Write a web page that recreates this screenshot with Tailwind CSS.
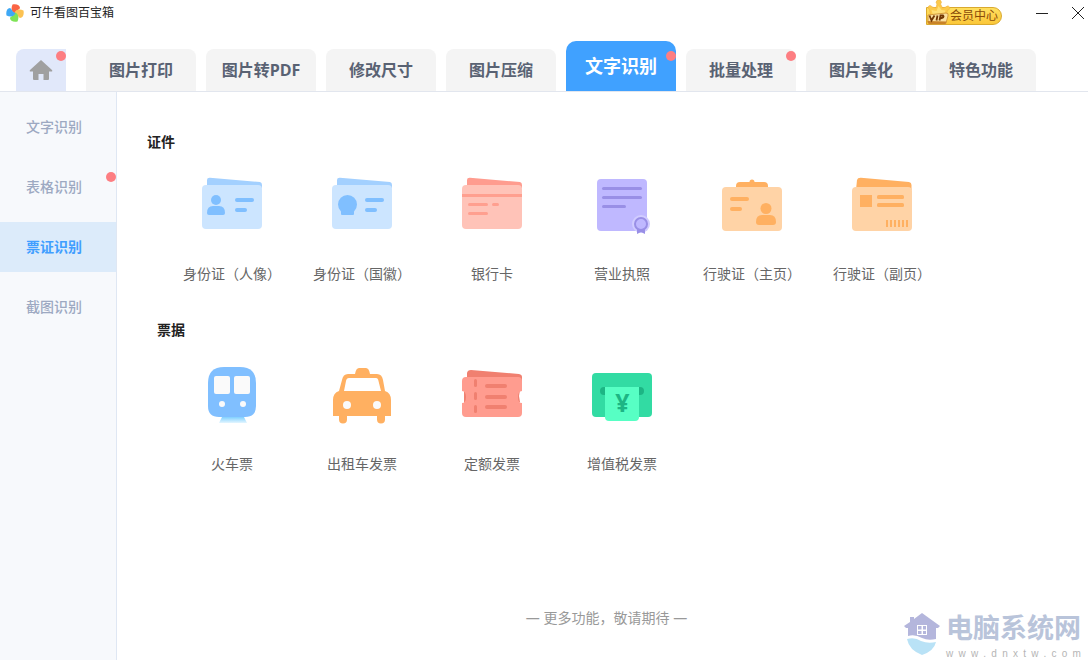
<!DOCTYPE html>
<html lang="zh-CN">
<head>
<meta charset="utf-8">
<meta name="viewport" content="width=device-width, initial-scale=1">
<title>可牛看图百宝箱</title>
<script src="https://cdn.jsdelivr.net/npm/@tailwindcss/browser@4"></script>
</head>
<body class="relative flex min-h-screen flex-col bg-white font-['Open_Sans','Noto_Sans_CJK_SC',sans-serif] text-sm text-[#666]">
<header class="flex h-[26px] items-center pl-1.5">
  <svg class="mr-1.5 size-[18px]" viewBox="0 0 18 18" aria-hidden="true">
    <path id="petal" d="M9 9.500C5 8 5 4 6.500.5c4-.8 7.500.5 7.500 3.500-1 2-4 2-5 5.500Z" fill="#fa6544"/>
    <path d="M9 9.500C5 8 5 4 6.500.5c4-.8 7.500.5 7.500 3.500-1 2-4 2-5 5.500Z" transform="rotate(90 9 9)" fill="#fcc252"/>
    <path d="M9 9.500C5 8 5 4 6.500.5c4-.8 7.500.5 7.500 3.500-1 2-4 2-5 5.500Z" transform="rotate(180 9 9)" fill="#7ee356"/>
    <path d="M9 9.500C5 8 5 4 6.500.5c4-.8 7.500.5 7.500 3.500-1 2-4 2-5 5.500Z" transform="rotate(270 9 9)" fill="#3ea8f5"/>
  </svg>
  <h1 class="grow text-xs leading-5 text-[#222]">可牛看图百宝箱</h1>
  <button class="relative mr-7 mt-1.5 flex h-[18px] w-[76px] items-center rounded-r-full border border-[#d9a92e] bg-linear-to-b from-[#ffdf5e] to-[#fbc738] pl-[23px] text-xs whitespace-nowrap text-[#8a4b08]">
    <svg class="absolute -left-px -top-[9px] h-[28px] w-[26px]" viewBox="0 0 26 28" aria-hidden="true">
      <path d="M5 18 3.500 10.500A2 2 0 1 1 6 8l4 1 1-4a2.500 2.500 0 1 1 3.500 0l2 4 3.500-1a2 2 0 1 1 1.500 3L20 18Z" fill="#fcc94a" stroke="#f0b445" stroke-width=".7"/>
      <path d="m5.500 11 5 1 2-5 3 4 4 .5L18 16H7Z" fill="#ffdf75"/>
      <path d="m2 16 18-2q3 0 2 3l-2 7q0 1-2 1H4q-2 0-2-2Z" fill="#fbe0a0" stroke="#d49a3c"/>
      <path d="m1.500 22 19 .5-1 2.500H4q-2 0-2.500-3Z" fill="#c98328"/>
      <path d="m3.500 16.500 2 5 3-5m3 0-1 5m3 0 1-5h2.500q2 2-3 3" fill="none" stroke="#713705" stroke-width="1.800"/>
    </svg>
    会员中心
  </button>
  <button class="mr-3 flex size-6 items-center justify-center" aria-label="最小化"><svg class="size-3" viewBox="0 0 12 12"><path d="M0 6.5h12" stroke="#222"/></svg></button>
  <button class="-mr-0.5 flex size-6 items-center justify-center" aria-label="关闭"><svg class="size-3" viewBox="0 0 12 12"><path d="m0 0 12 12M12 0 0 12" stroke="#222"/></svg></button>
</header>

<nav class="flex h-[66px] items-end gap-2.5 border-b border-[#e2e6ee] pl-4 text-base font-bold text-[#596273]" aria-label="功能">
  <button class="relative mr-2.5 flex h-[42px] w-[50px] items-center justify-center rounded-tl-lg bg-[#e1e8fa]" aria-label="首页">
    <svg class="h-[22px] w-6" viewBox="0 0 24 22" aria-hidden="true"><path d="M12 1 1 11q-1 1.500 1 1.500h2V20q0 1 1 1h4.500v-6h5v6H19q1 0 1-1v-7.500h2q2 0 1-1.500Z" fill="#a0a0a0"/></svg>
    <span class="absolute right-0 top-0.5 size-2.5 rounded-full bg-[#fd7e82]"></span>
  </button>
  <button class="h-[42px] w-[110px] rounded-t-lg bg-[#f4f4f4]">图片打印</button>
  <button class="h-[42px] w-[110px] rounded-t-lg bg-[#f4f4f4]">图片转PDF</button>
  <button class="h-[42px] w-[110px] rounded-t-lg bg-[#f4f4f4]">修改尺寸</button>
  <button class="h-[42px] w-[110px] rounded-t-lg bg-[#f4f4f4]">图片压缩</button>
  <button class="relative h-[50px] w-[110px] rounded-t-[10px] bg-[#40a1ff] text-lg text-white" aria-current="page">文字识别<span class="absolute right-0 top-2.5 size-2.5 rounded-full bg-[#fd7e82]"></span></button>
  <button class="relative h-[42px] w-[110px] rounded-t-lg bg-[#f4f4f4]">批量处理<span class="absolute right-0 top-0.5 size-2.5 rounded-full bg-[#fd7e82]"></span></button>
  <button class="h-[42px] w-[110px] rounded-t-lg bg-[#f4f4f4]">图片美化</button>
  <button class="h-[42px] w-[110px] rounded-t-lg bg-[#f4f4f4]">特色功能</button>
</nav>

<div class="flex grow">
  <aside class="flex w-[117px] shrink-0 flex-col gap-2.5 border-r border-[#dfe7f3] bg-[#f7f9fc] pt-2.5 font-medium text-[#9da9c2]">
    <button class="h-[50px] pr-2">文字识别</button>
    <button class="relative h-[50px] pr-2">表格识别<span class="absolute right-0 top-2.5 size-2.5 rounded-full bg-[#fd7e82]"></span></button>
    <button class="h-[50px] bg-[#dcebfa] pr-2 font-bold text-[#409eff]" aria-current="page">票证识别</button>
    <button class="h-[50px] pr-2">截图识别</button>
  </aside>

  <main class="flex grow flex-col pt-10">
    <section>
      <h2 class="pl-[30px] leading-5 font-bold text-[#222]">证件</h2>
      <div class="mt-[22px] flex flex-wrap pl-[50px]">
        <button class="flex w-[130px] flex-col items-center gap-[30px] whitespace-nowrap">
          <svg class="size-[60px]" viewBox="0 0 60 60" aria-hidden="true">
            <path d="M5 14V6q0-2.500 3-2.300L58 8q2 .5 2 3v3Z" fill="#a3d0ff"/><rect y="11" width="60" height="44" rx="4" fill="#cce5ff"/>
            <g fill="#80bfff"><circle cx="14" cy="26" r="5"/><path d="M5 39q0-7 6-7h6q6 0 6 7 0 2-2 2H7q-2 0-2-2Z"/><rect x="33" y="24" width="19" height="4" rx="2"/><rect x="33" y="34" width="12" height="4" rx="2"/></g>
          </svg>
          <span>身份证（人像）</span>
        </button>
        <button class="flex w-[130px] flex-col items-center gap-[30px] whitespace-nowrap">
          <svg class="size-[60px]" viewBox="0 0 60 60" aria-hidden="true">
            <path d="M5 14V6q0-2.500 3-2.300L58 8q2 .5 2 3v3Z" fill="#a3d0ff"/><rect y="11" width="60" height="44" rx="4" fill="#cce5ff"/>
            <g fill="#80bfff"><circle cx="15.500" cy="30.500" r="9.500"/><path d="M9 36h13v4q0 1-1 1H10q-1 0-1-1Z"/><rect x="33" y="24" width="19" height="4" rx="2"/><rect x="33" y="34" width="12" height="4" rx="2"/></g>
          </svg>
          <span>身份证（国徽）</span>
        </button>
        <button class="flex w-[130px] flex-col items-center gap-[30px] whitespace-nowrap">
          <svg class="size-[60px]" viewBox="0 0 60 60" aria-hidden="true">
            <path d="M5 14V6q0-2.500 3-2.300L58 8q2 .5 2 3v3Z" fill="#ff9c8f"/><rect y="11" width="60" height="44" rx="4" fill="#ffc3b8"/>
            <g fill="#ff9f8f"><path d="M0 20h60v3H0Z"/><rect x="6" y="29" width="20" height="3" rx="1.500"/><rect x="30" y="29" width="7" height="3" rx="1.500"/><rect x="6" y="38" width="20" height="3" rx="1.500"/></g>
          </svg>
          <span>银行卡</span>
        </button>
        <button class="flex w-[130px] flex-col items-center gap-[30px] whitespace-nowrap">
          <svg class="size-[60px]" viewBox="0 0 60 60" aria-hidden="true">
            <rect x="5" y="5" width="50" height="52" rx="4" fill="#bfb8ff"/>
            <g fill="#998fe6"><rect x="10" y="13" width="40" height="3" rx="1.500"/><rect x="10" y="22" width="40" height="3" rx="1.500"/><rect x="10" y="31" width="24" height="3" rx="1.500"/></g>
            <circle cx="49" cy="50" r="9" fill="#d1ccff"/><path d="M45 54h8v6l-4-2-4 2Z" fill="#998fe6"/><circle cx="49" cy="50" r="6" fill="#bfb8ff" stroke="#998fe6" stroke-width="2"/>
          </svg>
          <span>营业执照</span>
        </button>
        <button class="flex w-[130px] flex-col items-center gap-[30px] whitespace-nowrap">
          <svg class="size-[60px]" viewBox="0 0 60 60" aria-hidden="true">
            <path d="M14 15v-3q0-4 4-4h9.500a2.500 2.500 0 0 1 5 0H42q4 0 4 4v3Z" fill="#ffb061"/><rect y="13" width="60" height="44" rx="4" fill="#ffd3a6"/>
            <g fill="#ffb061"><rect x="8" y="23" width="19" height="4" rx="2"/><rect x="8" y="33" width="12" height="4" rx="2"/><circle cx="44" cy="34.500" r="5.500"/><path d="M34 48q0-7 6-7h8q6 0 6 7 0 3-3 3H37q-3 0-3-3Z"/></g>
          </svg>
          <span>行驶证（主页）</span>
        </button>
        <button class="flex w-[130px] flex-col items-center gap-[30px] whitespace-nowrap">
          <svg class="size-[60px]" viewBox="0 0 60 60" aria-hidden="true">
            <path d="M4 16 5 6q.5-2.500 4-2.300L57 8q2.500.5 2.500 3v5Z" fill="#ffb061"/><rect y="13" width="60" height="44" rx="4" fill="#ffd3a6"/>
            <g fill="#ffb061"><path d="M8 21h12v12H8Z"/><rect x="25" y="21" width="27" height="4" rx="1.500"/><rect x="25" y="29" width="27" height="4" rx="1.500"/><path d="M34 46h2v7h-2Zm4 0h2v7h-2Zm4 0h2v7h-2Zm4 0h2v7h-2Zm4 0h2v7h-2Zm4 0h2v7h-2Z"/></g>
          </svg>
          <span>行驶证（副页）</span>
        </button>
      </div>
    </section>

    <section class="mt-9">
      <h2 class="pl-10 leading-5 font-bold text-[#222]">票据</h2>
      <div class="mt-6 flex flex-wrap pl-[50px]">
        <button class="flex w-[130px] flex-col items-center gap-[30px] whitespace-nowrap">
          <svg class="size-[60px]" viewBox="0 0 60 60" aria-hidden="true">
            <defs><linearGradient id="rail" x2="0" y2="1"><stop stop-color="#80d0ff"/><stop offset="1" stop-color="#e4f6ff"/></linearGradient></defs>
            <path d="M20 53h22l3 6H17Z" fill="url(#rail)"/>
            <path d="M22 3h16q16 0 16 16v23q0 11-11 11H17Q6 53 6 42V19Q6 3 22 3Z" fill="#80bfff"/>
            <g fill="#fafafa"><rect x="12" y="12" width="16" height="18" rx="2"/><rect x="32" y="12" width="16" height="18" rx="2"/><circle cx="20" cy="40" r="3"/><circle cx="41" cy="40" r="3"/></g>
          </svg>
          <span>火车票</span>
        </button>
        <button class="flex w-[130px] flex-col items-center gap-[30px] whitespace-nowrap">
          <svg class="size-[60px]" viewBox="0 0 60 60" aria-hidden="true">
            <path d="M23 10q1-6 4-6h7q3 0 4 6h7q5 0 6 6l2 11q6 2 6 9v16h-6v3.500a4 4 0 0 1-8 0V52H15v3.500a4 4 0 0 1-8 0V52H1V36q0-7 6-9l3-11q1-6 6-6Z" fill="#ffb061"/>
            <path d="M17 14h27q2 0 2.500 3L49 27H12l2-10q.5-3 3-3Z" fill="#fff"/><g fill="#fafafa"><circle cx="15" cy="41" r="4"/><circle cx="45" cy="41" r="4"/></g>
          </svg>
          <span>出租车发票</span>
        </button>
        <button class="flex w-[130px] flex-col items-center gap-[30px] whitespace-nowrap">
          <svg class="size-[60px]" viewBox="0 0 60 60" aria-hidden="true">
            <path d="M5 15V9q.5-3 4-3l48 4q3 .5 3 3v5Z" fill="#f08070"/><path d="M2 26h3v14H2Zm53 0h3l-1 6 1 6h-3Z" fill="#f08070"/>
            <path d="M4 13h52q4 0 4 4v10q-4 0-4 6t4 6v10q0 4-4 4H4q-4 0-4-4V39q4 0 4-6t-4-6V17q0-4 4-4Z" fill="#ff9c8f"/>
            <g fill="#f08070"><rect x="12" y="15" width="3" height="8" rx="1.500"/><rect x="12" y="28" width="3" height="8" rx="1.500"/><rect x="12" y="41" width="3" height="8" rx="1.500"/><rect x="23" y="20" width="22" height="4" rx="2"/><rect x="23" y="31" width="22" height="4" rx="2"/><rect x="23" y="41" width="22" height="4" rx="2"/></g>
          </svg>
          <span>定额发票</span>
        </button>
        <button class="flex w-[130px] flex-col items-center gap-[30px] whitespace-nowrap">
          <svg class="size-[60px]" viewBox="0 0 60 60" aria-hidden="true">
            <rect y="9" width="60" height="44" rx="4" fill="#32dba3"/><rect x="8" y="23" width="44" height="8" rx="4" fill="#1db584"/><path d="M13 23h34v30q0 4-4 4H17q-4 0-4-4Z" fill="#57ffc4"/>
            <text x="30.500" y="48" text-anchor="middle" font-family="Open Sans" font-size="25" font-weight="700" fill="#1db584">¥</text>
          </svg>
          <span>增值税发票</span>
        </button>
      </div>
    </section>
    <p class="mt-auto pb-8 pl-2 text-center leading-5 text-[#999]">— 更多功能，敬请期待 —</p>
  </main>
</div>

<div class="absolute right-[7px] bottom-0 flex items-center gap-1.5">
  <svg class="h-[42px] w-9" viewBox="0 0 36 42" aria-hidden="true">
    <path d="m18 0 18 13-2 2h-2v11q-8 2-14-1-7-4-14-2v-8H2l-2-2 6-4V4h4v2Z" fill="#b4b6dc"/>
    <path d="M13 12h10v10H13Z" fill="#fff"/><path d="M14 13h3.500v3.500H14Zm5 0h3v3.500h-3Zm-5 5h3.500v3H14Zm5 0h3v3h-3Z" fill="#b4b6dc"/>
    <path d="M3 26q8-2 14 2 7 3 15 1-2 9-14 13Q5 37 3 26Z" fill="#b9e2f6"/>
  </svg>
  <div class="text-[#b9c4da]">
    <p class="text-[27px] leading-10 font-bold">电脑系统网</p>
    <p class="flex justify-between font-['Liberation_Sans',sans-serif] text-[10px] leading-3 text-[#b5b5b5]" aria-label="www.dnxtw.com"><span>w</span><span>w</span><span>w</span><span>.</span><span>d</span><span>n</span><span>x</span><span>t</span><span>w</span><span>.</span><span>c</span><span>o</span><span>m</span></p>
  </div>
</div>
</body>
</html>
